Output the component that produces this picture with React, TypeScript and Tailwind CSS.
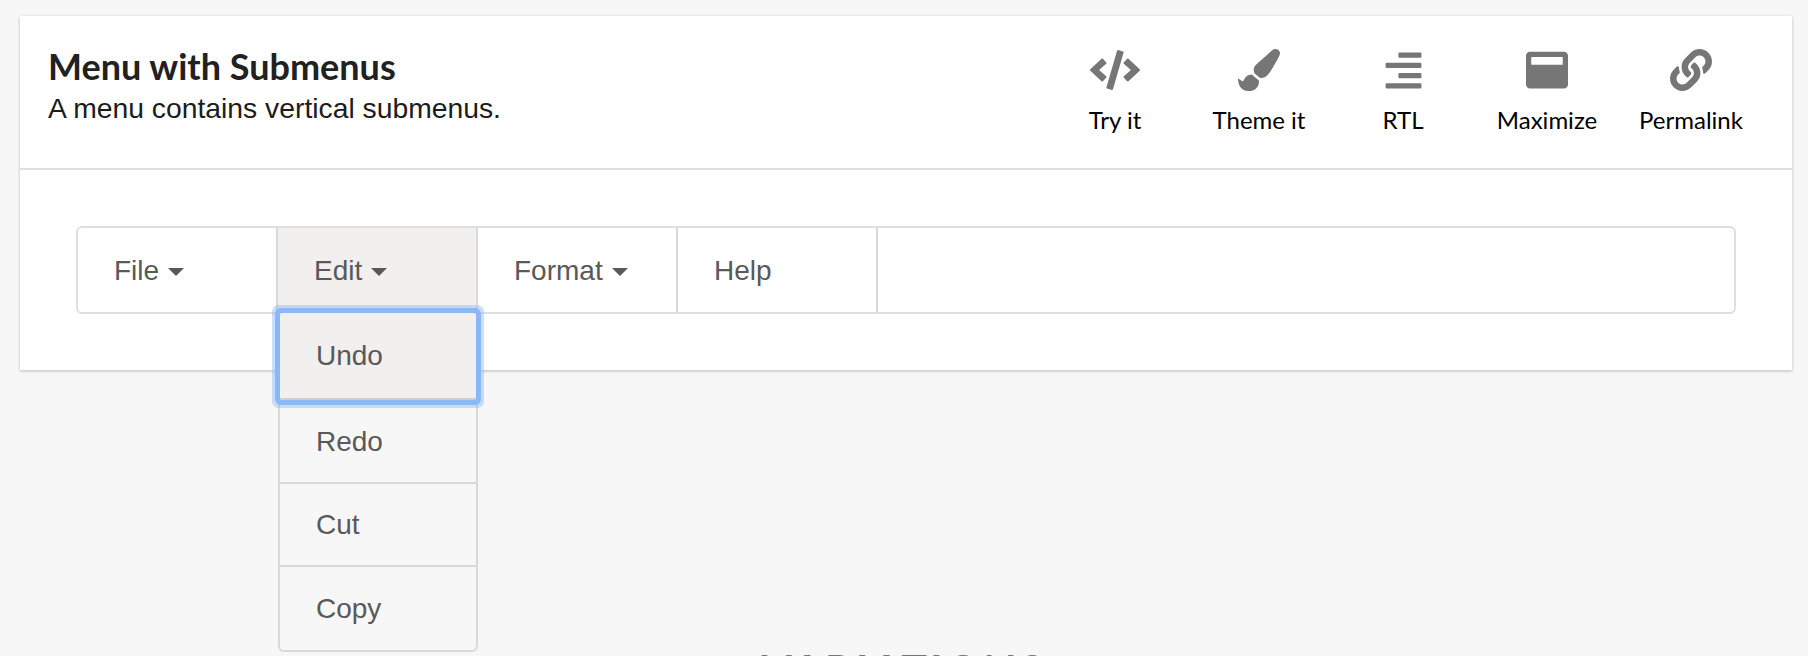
import React from 'react';
import { FaCode, FaPaintBrush, FaAlignRight, FaWindowMaximize, FaLink } from 'react-icons/fa';

const ACTIONS = [
  { label: 'Try it', icon: FaCode, size: 50 },
  { label: 'Theme it', icon: FaPaintBrush, size: 42 },
  { label: 'RTL', icon: FaAlignRight, size: 41 },
  { label: 'Maximize', icon: FaWindowMaximize, size: 42 },
  { label: 'Permalink', icon: FaLink, size: 42 },
];

const MENU_ITEMS = [
  { label: 'File', caret: true },
  { label: 'Edit', caret: true, active: true },
  { label: 'Format', caret: true },
  { label: 'Help', caret: false },
];

const SUB_ITEMS = ['Redo', 'Cut', 'Copy'];

const Caret = () => (
  <span className="ml-[9px] mt-[2px] inline-block h-0 w-0 border-x-[8px] border-t-[8px] border-x-transparent border-t-[#595959]" />
);

export default function App() {
  return (
    <div className="h-[656px] overflow-hidden bg-[#f7f7f7] pt-[16px] font-['Liberation_Sans',sans-serif]">
      {/* Example card */}
      <div className="mx-[20px] h-[354px] w-[1772px] bg-white shadow-[0_1px_3px_rgba(0,0,0,0.25)]">
        {/* Header */}
        <div className="flex h-[154px] items-start justify-between border-b-2 border-[#dfdfdf] pr-[29px]">
          <div className="pl-[28px] pt-[32px]">
            <h2 className="font-['Lato',sans-serif] text-[36px] font-bold leading-[36px] text-[#212121]">
              Menu with Submenus
            </h2>
            <p className="mt-[6px] text-[28.3px] leading-[36px] text-[#1c1c1c]">A menu contains vertical submenus.</p>
          </div>
          <div className="flex pt-[33px]">
            {ACTIONS.map(({ label, icon: Icon, size }) => (
              <div key={label} className="flex w-[144px] flex-col items-center">
                <div className="flex h-[42px] items-center justify-center text-[#767676]">
                  <Icon size={size} />
                </div>
                <span className="mt-[15px] font-['Lato',sans-serif] text-[24px] leading-[28px] text-black">{label}</span>
              </div>
            ))}
          </div>
        </div>

        {/* Menu */}
        <div className="px-[56px] pt-[56px]">
          <div className="relative flex h-[88px] w-[1660px] rounded-[6px] border-2 border-[#dfdfdf] text-[28px] text-[#595959]">
            {MENU_ITEMS.map((item) => (
              <div
                key={item.label}
                className={`flex w-[200px] items-center border-r-2 border-[#d9d9d9] pl-[36px] pt-[2px] ${
                  item.active ? 'bg-[#f2f0ef]' : ''
                }`}
              >
                {item.label}
                {item.caret && <Caret />}
              </div>
            ))}

            {/* Open submenu */}
            <div className="absolute left-[200px] top-[83px] w-[200px] rounded-b-[6px] border-x-2 border-b-2 border-[#d9d9d9] pt-[2px]">
              <div className="relative z-10 flex h-[87px] items-center rounded-[2px] border-b-2 border-[#d0d0d0] bg-[#f2f0ef] pl-[36px] shadow-[0_0_0_5px_#8ab8f5,0_0_0_8px_rgba(138,184,245,0.45)]">
                Undo
              </div>
              <div className="pt-[1px]">
                {SUB_ITEMS.map((label, i) => (
                  <div
                    key={label}
                    className={`flex h-[83px] items-center pl-[36px] ${i < 2 ? 'border-b-2 border-[#d9d9d9]' : ''}`}
                  >
                    {label}
                  </div>
                ))}
              </div>
            </div>
          </div>
        </div>
      </div>

      <h2 className="mt-[279px] text-center font-['Lato',sans-serif] text-[43px] font-bold leading-[44px] tracking-[3px] text-[#767676]">
        VARIATIONS
      </h2>
    </div>
  );
}
